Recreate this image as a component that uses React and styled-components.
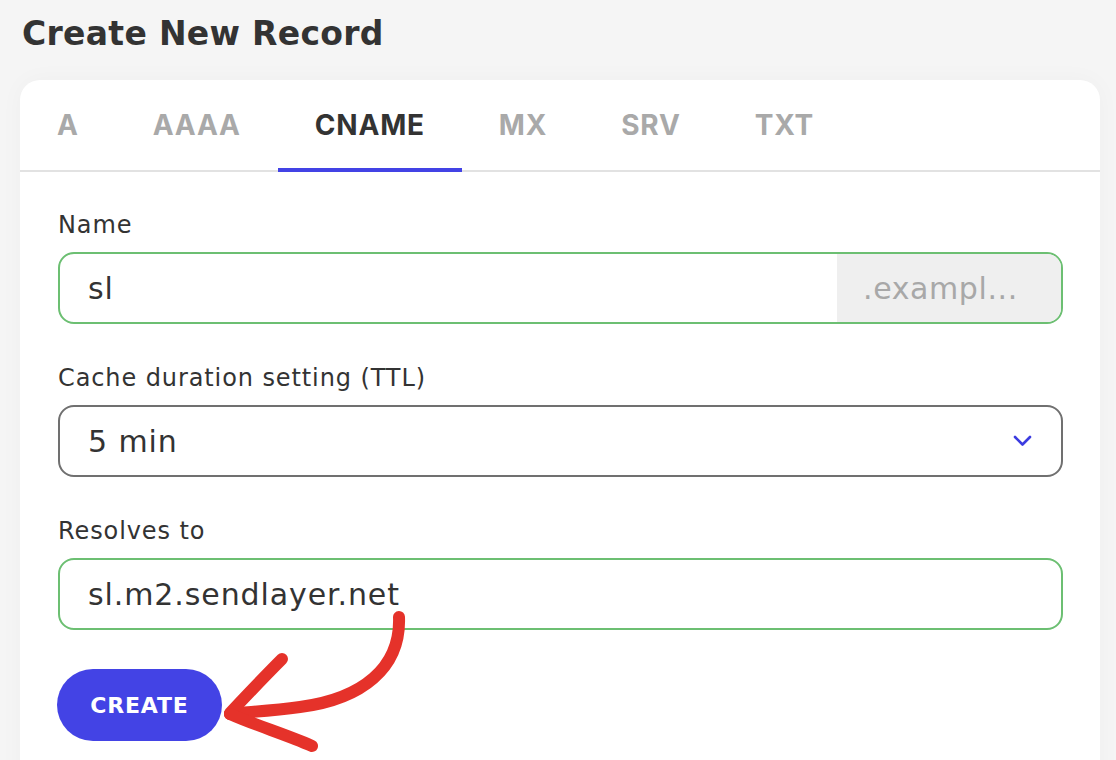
import React, { useState } from "react";
import styled, { createGlobalStyle } from "styled-components";

const GlobalStyle = createGlobalStyle`
  body {
    margin: 0;
    background: #f5f5f5;
    font-family: "DejaVu Sans", "Noto Sans", sans-serif;
    color: #333333;
  }
  * {
    box-sizing: border-box;
  }
`;

const Page = styled.div`
  position: relative;
  width: 1116px;
  height: 760px;
  overflow: hidden;
  padding: 12px 16px 0 20px;
`;

const Title = styled.h1`
  margin: 0 0 0 2px;
  font-size: 33px;
  line-height: 44px;
  font-weight: 700;
  letter-spacing: 0.3px;
  color: #333333;
`;

const Card = styled.div`
  margin-top: 24px;
  width: 1080px;
  background: #ffffff;
  border-radius: 20px;
  box-shadow: 0 0 24px rgba(0, 0, 0, 0.03);
  min-height: 720px;
`;

const TabBar = styled.div`
  display: flex;
  height: 92px;
  border-bottom: 2px solid #e2e2e2;
`;

const Tab = styled.div`
  position: relative;
  display: flex;
  align-items: center;
  justify-content: center;
  padding: 0 37px;
  font-family: "Inter", "Noto Sans", sans-serif;
  font-size: 28px;
  font-weight: 700;
  letter-spacing: 0.8px;
  color: ${({ active }) => (active ? "#333333" : "#a9a9a9")};
  cursor: pointer;

  &::after {
    content: "";
    position: absolute;
    left: 0;
    right: 0;
    bottom: -2px;
    height: 4px;
    background: ${({ active }) => (active ? "#4343e5" : "transparent")};
  }
`;

const Form = styled.div`
  display: flex;
  flex-direction: column;
  gap: 39px;
  padding: 38px 37px 0 38px;
`;

const Field = styled.div`
  display: flex;
  flex-direction: column;
  gap: 12px;
`;

const Label = styled.label`
  font-size: 24px;
  line-height: 30px;
  letter-spacing: 0.9px;
  color: #333333;
`;

const InputBox = styled.div`
  display: flex;
  align-items: center;
  height: 72px;
  border: 2px solid ${({ tone }) => (tone === "neutral" ? "#707070" : "#6cbf72")};
  border-radius: 16px;
  overflow: hidden;
  background: #ffffff;
`;

const Value = styled.div`
  flex: 1;
  padding-left: 28px;
  font-size: 30px;
  letter-spacing: 0.9px;
  color: #333333;
`;

const Suffix = styled.div`
  width: 224px;
  height: 100%;
  display: flex;
  align-items: center;
  padding-left: 26px;
  background: #efefef;
  color: #a8a8a8;
  font-size: 30px;
  letter-spacing: 0.6px;
  white-space: nowrap;
`;

const Chevron = styled.svg`
  margin-right: 29px;
`;

const CreateButton = styled.button`
  align-self: flex-start;
  margin-left: -1px;
  width: 165px;
  height: 72px;
  border: none;
  border-radius: 36px;
  background: #4343e5;
  color: #ffffff;
  font-family: "DejaVu Sans", "Noto Sans", sans-serif;
  font-size: 22px;
  font-weight: 700;
  letter-spacing: 0.8px;
  cursor: pointer;
`;

const Annotation = styled.svg`
  position: absolute;
  left: 0;
  top: 0;
  pointer-events: none;
`;

const tabs = ["A", "AAAA", "CNAME", "MX", "SRV", "TXT"];

export default function App() {
  const [active, setActive] = useState("CNAME");
  return (
    <>
      <GlobalStyle />
      <Page>
        <Title>Create New Record</Title>
        <Card>
          <TabBar>
            {tabs.map((t) => (
              <Tab key={t} active={t === active} onClick={() => setActive(t)}>
                {t}
              </Tab>
            ))}
          </TabBar>
          <Form>
            <Field>
              <Label>Name</Label>
              <InputBox>
                <Value>sl</Value>
                <Suffix>.exampl...</Suffix>
              </InputBox>
            </Field>
            <Field>
              <Label>Cache duration setting (TTL)</Label>
              <InputBox tone="neutral">
                <Value>5 min</Value>
                <Chevron width="19" height="12" viewBox="0 0 19 12">
                  <polyline
                    points="2,2 9.5,9.5 17,2"
                    fill="none"
                    stroke="#3c3ce0"
                    strokeWidth="2.6"
                    strokeLinecap="round"
                    strokeLinejoin="round"
                  />
                </Chevron>
              </InputBox>
            </Field>
            <Field>
              <Label>Resolves to</Label>
              <InputBox>
                <Value>sl.m2.sendlayer.net</Value>
              </InputBox>
            </Field>
            <CreateButton>CREATE</CreateButton>
          </Form>
        </Card>
        <Annotation width="1116" height="760" viewBox="0 0 1116 760">
          <g fill="none" stroke="#e5322a" strokeWidth="12" strokeLinecap="round" strokeLinejoin="round">
            <path d="M399 617 C401 668 362 699 300 707 C270 711 248 712 230 714" />
            <path d="M282 659 C265 676 246 696 230 713" />
            <path d="M230 714 C257 726 285 734 312 746" />
          </g>
        </Annotation>
      </Page>
    </>
  );
}
